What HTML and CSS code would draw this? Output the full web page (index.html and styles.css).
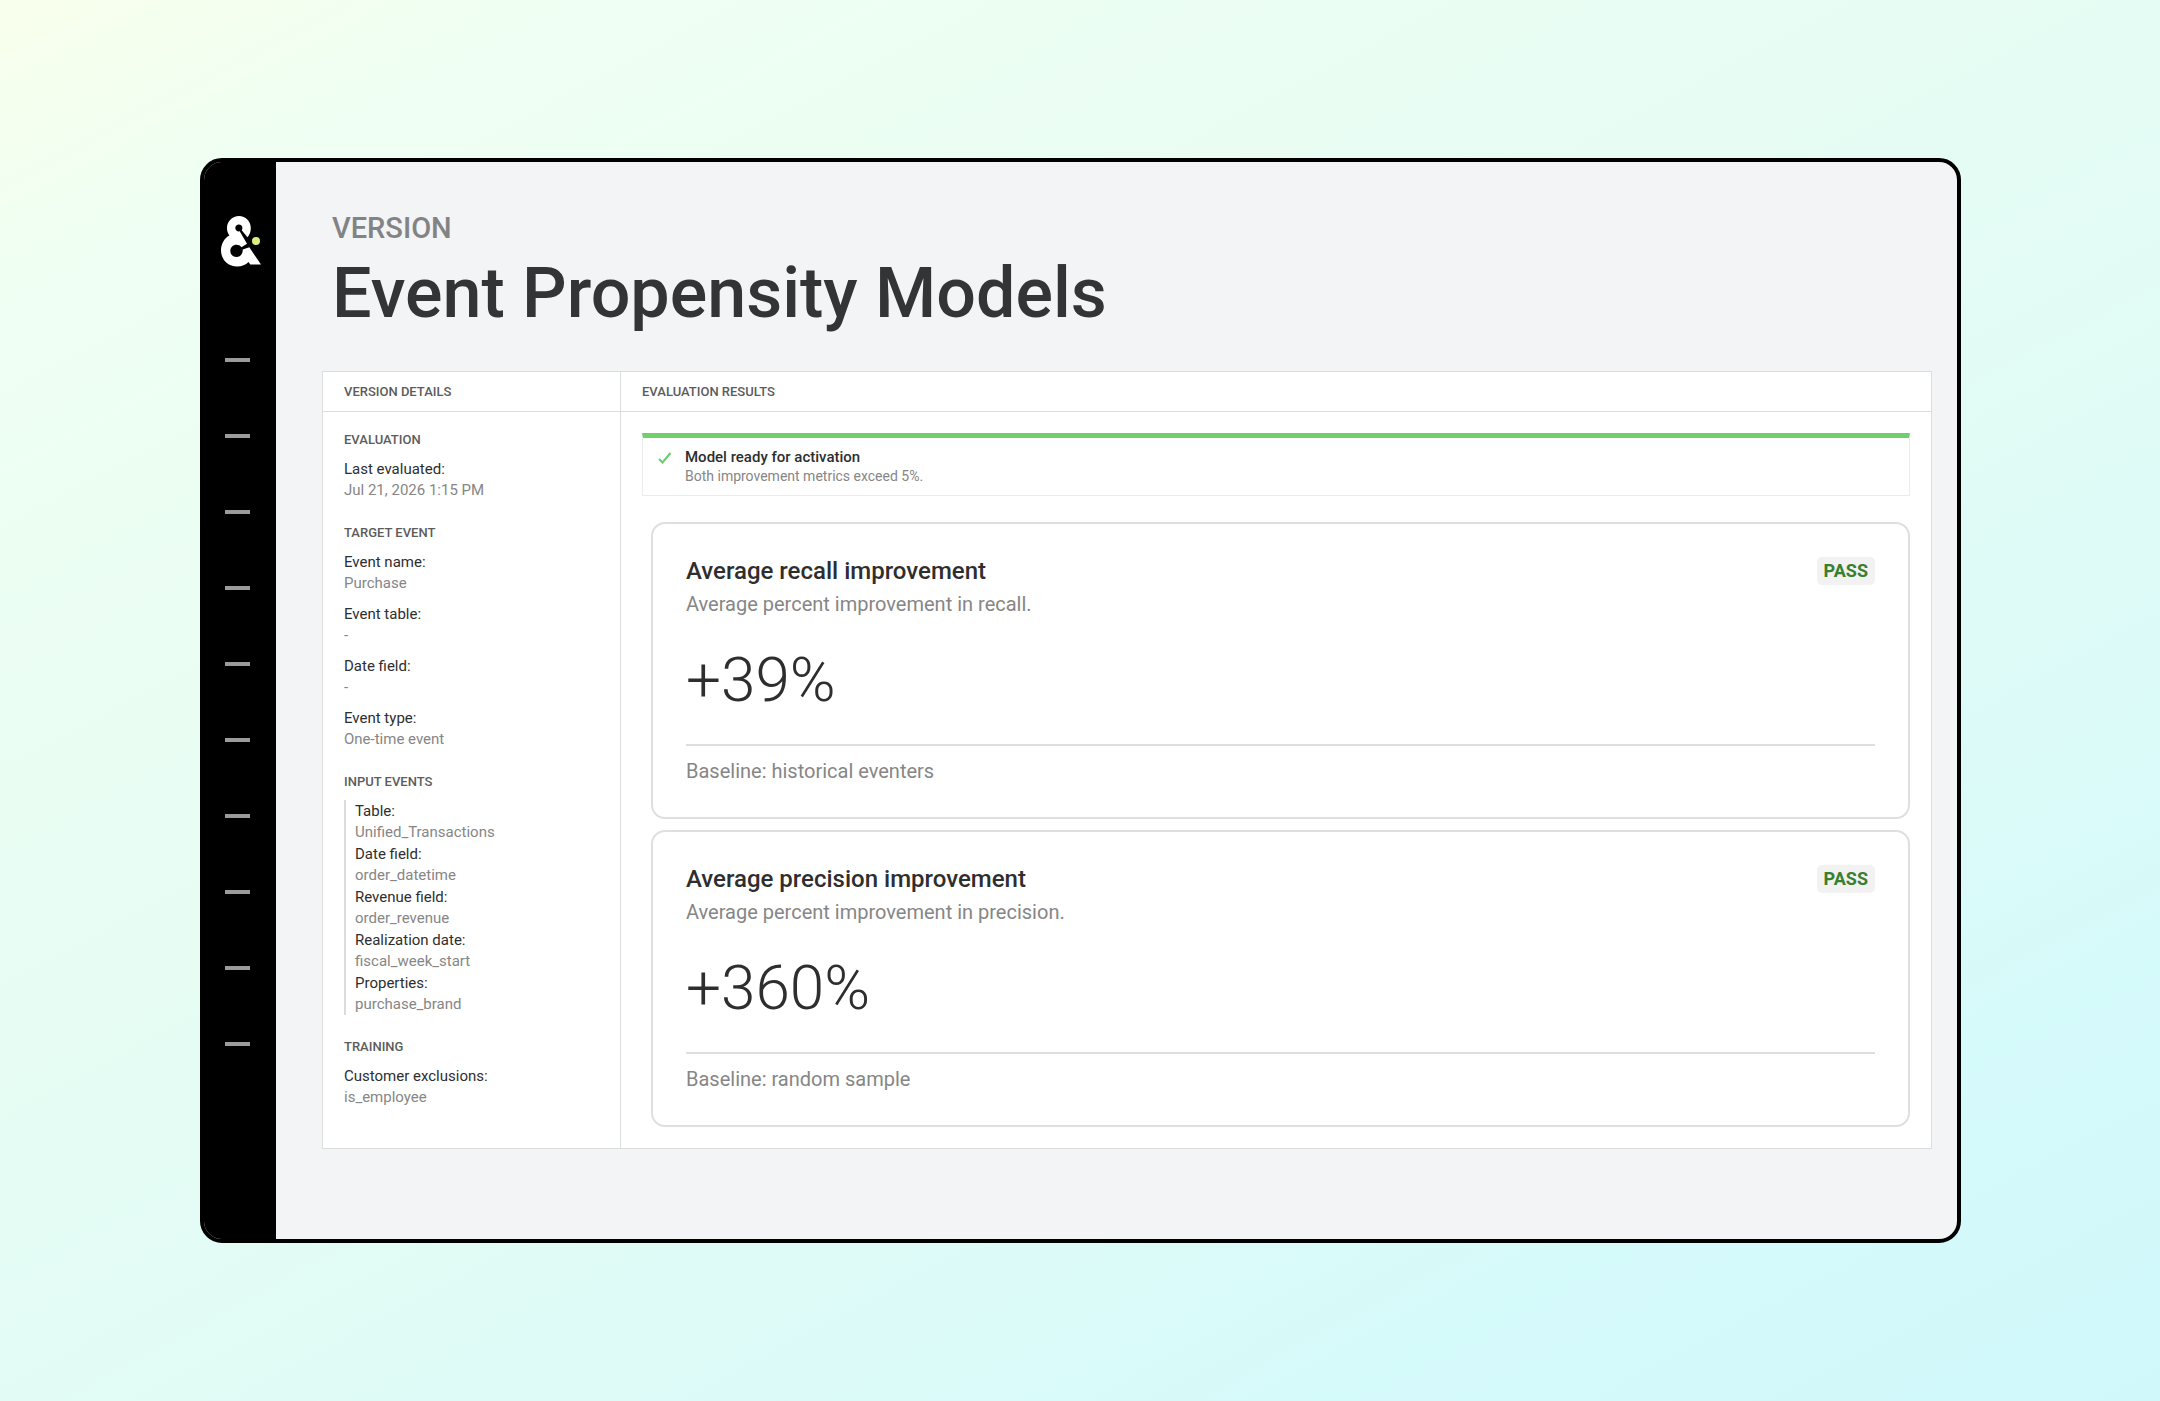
FILE: index.html
```html
<!DOCTYPE html>
<html lang="en">
<head>
<meta charset="utf-8">
<meta name="viewport" content="width=device-width, initial-scale=1">
<title>Event Propensity Models</title>
<link rel="stylesheet" href="styles.css">
</head>
<body>
<div class="window">
  <nav class="rail" aria-label="Main">
    <a class="logo" href="#" aria-label="Home">
      <svg viewBox="0 0 40 50" width="40" height="50" aria-hidden="true">
        <path fill="#fff" d="M18 0C11.500 0 6 5.300 6 12C6 15 6.800 17.400 8.400 19.400C3.500 22 0 27.500 0 34.500C0 43.500 7 50.500 16 50.500C21 50.500 24.600 48.800 27.500 46L29.300 48.600H40L28.300 31.300L21.700 33.500C22.100 37.500 19.400 41 15.600 41C12 41 9.300 38.400 9.300 35C9.300 31.400 12 28.800 15.500 28.800C17.600 28.800 19.200 29.600 20.400 31.200L26 27.800L18.700 15.300C16.500 15.800 14.300 14.300 14.300 12C14.300 10 15.900 8.500 17.900 8.500C19.900 8.500 21.400 10 21.400 12C21.400 12.900 21.100 13.600 20.700 14.200L26.500 21.200C28.700 18.800 29.800 15.800 29.800 12C29.800 5.200 24.600 0 18 0Z"/>
        <circle cx="35" cy="25" r="4" fill="#dcef7c"/>
      </svg>
    </a>
    <ul class="rail-items">
      <li></li><li></li><li></li><li></li><li></li><li></li><li></li><li></li><li></li><li></li>
    </ul>
  </nav>
  <main class="content">
    <header class="page-head">
      <p class="kicker">VERSION</p>
      <h1>Event Propensity Models</h1>
    </header>
    <div class="panel">
      <section class="details">
        <h2 class="bar">VERSION DETAILS</h2>
        <div class="details-body">
          <section>
            <h3>EVALUATION</h3>
            <dl>
              <div><dt>Last evaluated:</dt><dd>Jul 21, 2026 1:15 PM</dd></div>
            </dl>
          </section>
          <section>
            <h3>TARGET EVENT</h3>
            <dl>
              <div><dt>Event name:</dt><dd>Purchase</dd></div>
              <div><dt>Event table:</dt><dd>-</dd></div>
              <div><dt>Date field:</dt><dd>-</dd></div>
              <div><dt>Event type:</dt><dd>One-time event</dd></div>
            </dl>
          </section>
          <section>
            <h3>INPUT EVENTS</h3>
            <dl class="nested">
              <div><dt>Table:</dt><dd>Unified_Transactions</dd></div>
              <div><dt>Date field:</dt><dd>order_datetime</dd></div>
              <div><dt>Revenue field:</dt><dd>order_revenue</dd></div>
              <div><dt>Realization date:</dt><dd>fiscal_week_start</dd></div>
              <div><dt>Properties:</dt><dd>purchase_brand</dd></div>
            </dl>
          </section>
          <section>
            <h3>TRAINING</h3>
            <dl>
              <div><dt>Customer exclusions:</dt><dd>is_employee</dd></div>
            </dl>
          </section>
        </div>
      </section>
      <section class="results">
        <h2 class="bar">EVALUATION RESULTS</h2>
        <div class="results-body">
          <div class="notice" role="status">
            <svg viewBox="0 0 14 12" width="14" height="12" aria-hidden="true"><path d="M1 7L4.500 10.500L12.500 1" fill="none" stroke="#66cf68" stroke-width="2"/></svg>
            <div>
              <p class="notice-title">Model ready for activation</p>
              <p class="notice-text">Both improvement metrics exceed 5%.</p>
            </div>
          </div>
          <div class="cards">
            <article class="card">
              <div class="card-head"><h3>Average recall improvement</h3><span class="badge">PASS</span></div>
              <p class="card-text">Average percent improvement in recall.</p>
              <p class="metric">+39%</p>
              <p class="baseline">Baseline: historical eventers</p>
            </article>
            <article class="card">
              <div class="card-head"><h3>Average precision improvement</h3><span class="badge">PASS</span></div>
              <p class="card-text">Average percent improvement in precision.</p>
              <p class="metric">+360%</p>
              <p class="baseline">Baseline: random sample</p>
            </article>
          </div>
        </div>
      </section>
    </div>
  </main>
</div>
</body>
</html>
```
FILE: styles.css
```css
* { box-sizing: border-box; }
h1, h2, h3, p, ul, dl, dd { margin: 0; }

body {
  margin: 0;
  min-height: 100vh;
  padding: 158px 199px 158px 200px;
  display: flex;
  font-family: Roboto, "Liberation Sans", sans-serif;
  color: #2e2e2f;
  background: linear-gradient(152deg, #f9ffec 0%, #f0fff2 10%, #e8fdf3 36%, #e0fbf6 62%, #d6fafa 82%, #d0f8fb 100%);
}

.window {
  flex: 1;
  display: flex;
  border: 4px solid #000;
  border-radius: 22px;
  background: #f3f4f6;
  overflow: hidden;
}

.rail {
  flex: none;
  width: 72px;
  padding: 54px 0 0 17px;
  background: #000;
}
.logo { display: block; height: 50px; }
.logo svg { display: block; overflow: visible; }
.rail-items {
  list-style: none;
  margin: 92px 0 0 4px;
  padding: 0;
  display: grid;
  gap: 72px;
}
.rail-items li { width: 25px; height: 4px; background: #9b9b9b; }

.content { flex: 1; min-width: 0; padding: 46px 25px 40px 46px; }
.page-head { padding-left: 10px; }
.kicker { font-size: 29px; line-height: 40px; font-weight: 500; color: #828385; }
h1 { font-size: 70px; line-height: 90px; font-weight: 500; color: #333436; }

.panel {
  display: flex;
  margin-top: 33px;
  border: 1px solid #dcdddd;
  background: #fff;
}
.details { flex: none; width: 298px; border-right: 1px solid #dcdddd; }
.results { flex: 1; min-width: 0; }
.bar {
  padding: 0 21px;
  border-bottom: 1px solid #dcdddd;
  font-size: 13px;
  line-height: 39px;
  font-weight: 500;
  color: #5c5c5c;
}

.details-body { display: grid; gap: 22px; padding: 18px 21px 35px; }
.details h3 { margin-bottom: 8px; font-size: 13px; line-height: 20px; font-weight: 500; color: #5c5c5c; }
.details dl { display: grid; gap: 9px; font-size: 15px; }
.details dl.nested { gap: 0; padding-left: 9px; border-left: 2px solid #dcdcdc; }
.details dt { line-height: 22px; }
.details dd { line-height: 21px; color: #868686; }

.results-body { padding: 21px; }
.notice {
  display: flex;
  gap: 13px;
  padding: 9px 15px 10px;
  border: 1px solid #ececec;
  border-top: 5px solid #70d16c;
}
.notice svg { margin-top: 5px; }
.notice-title { font-size: 15px; line-height: 20px; font-weight: 500; }
.notice-text { font-size: 14px; line-height: 18px; color: #868686; }

.cards { display: grid; gap: 11px; margin: 26px 0 0 9px; }
.card { padding: 32px 33px; border: 2px solid #dedfe0; border-radius: 14px; }
.card-head { display: flex; justify-content: space-between; align-items: center; }
.card h3 { font-size: 24px; line-height: 30px; font-weight: 500; }
.badge {
  padding: 0 7px;
  border-radius: 5px;
  background: #f1f2f1;
  color: #37802f;
  font-size: 18px;
  line-height: 28px;
  font-weight: 700;
}
.card-text { font-size: 20px; line-height: 36px; color: #868686; }
.metric { padding: 21px 0 27px; font-size: 62px; line-height: 74px; font-weight: 300; }
.baseline { padding-top: 11px; border-top: 2px solid #dedfe0; font-size: 20px; line-height: 28px; color: #868686; }
```
